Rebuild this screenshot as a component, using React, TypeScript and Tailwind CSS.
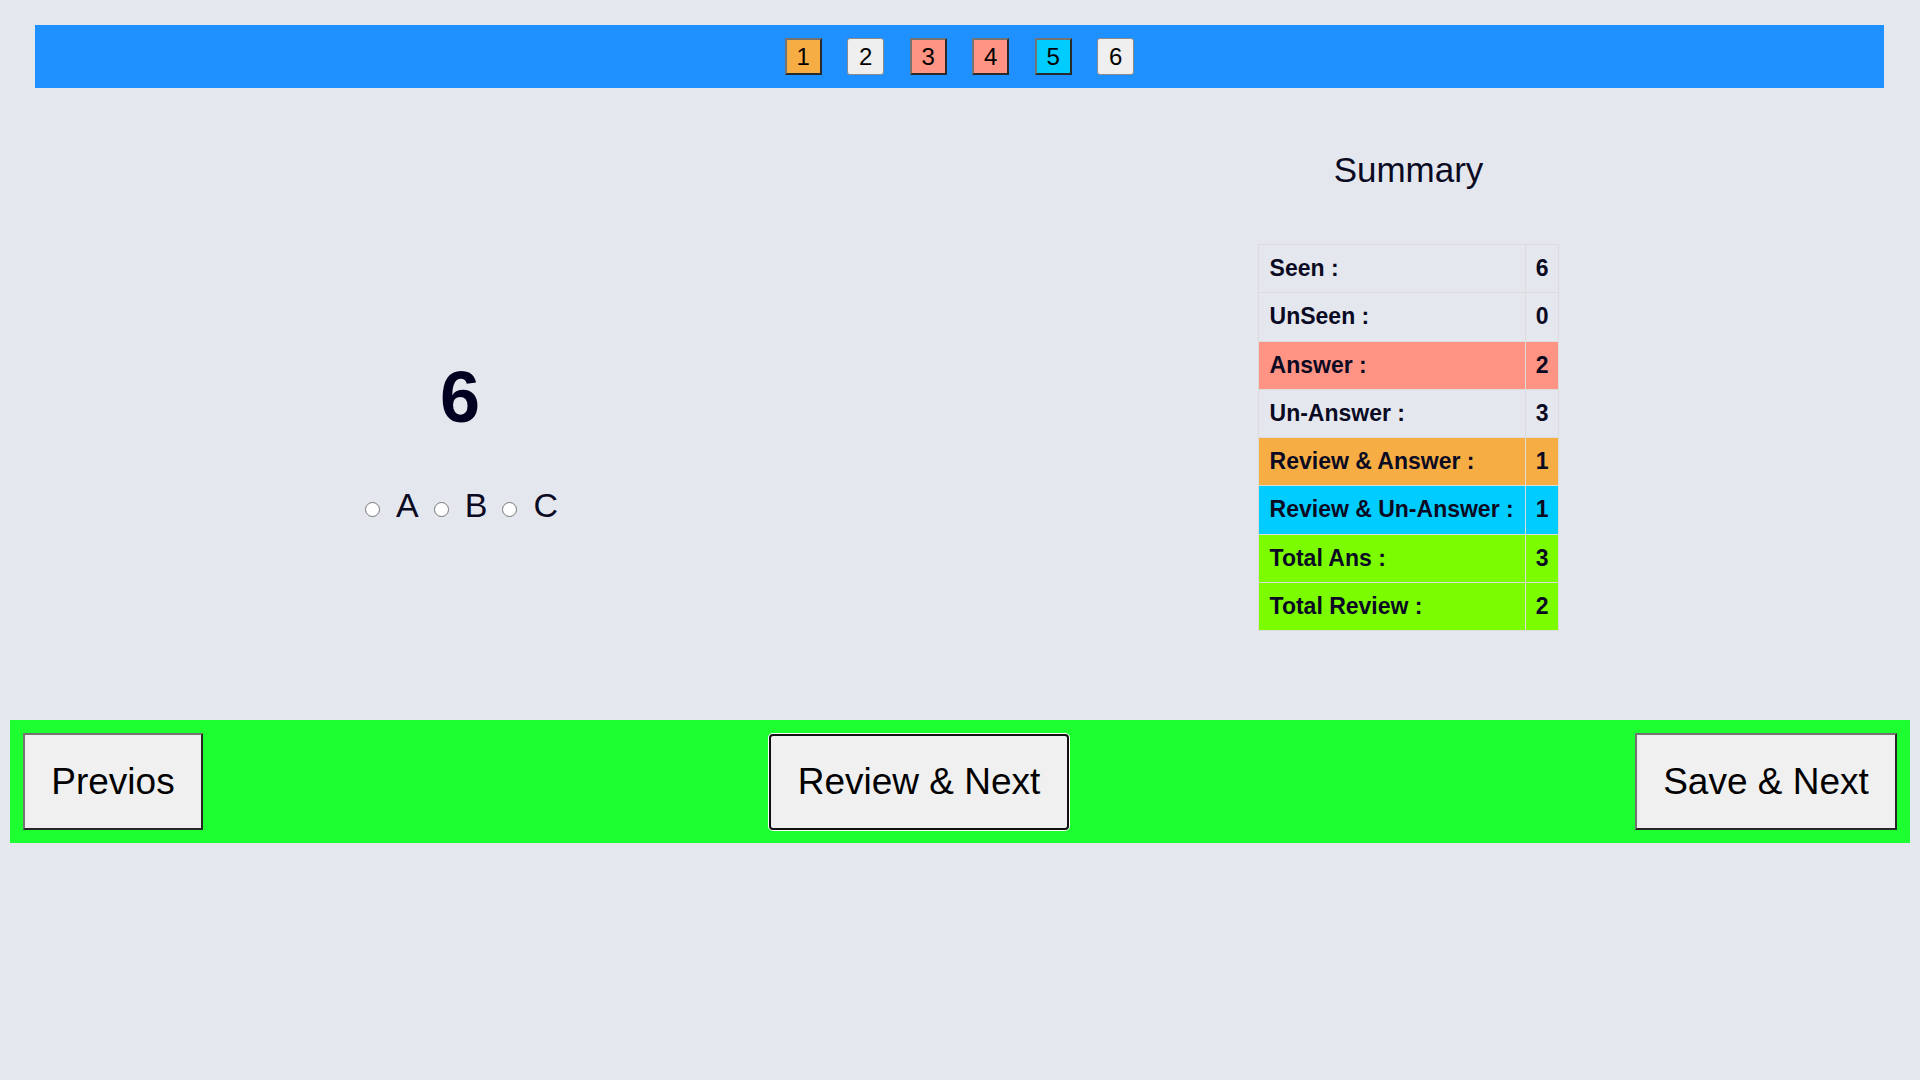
import React from 'react';

type Status = 'answered' | 'seen' | 'marked' | 'review';

const questions: { n: number; status: Status }[] = [
  { n: 1, status: 'marked' },
  { n: 2, status: 'seen' },
  { n: 3, status: 'answered' },
  { n: 4, status: 'answered' },
  { n: 5, status: 'review' },
  { n: 6, status: 'seen' },
];

const statusClass: Record<Status, string> = {
  marked: 'bg-[#f6ae44] border-2 border-t-[#737373] border-l-[#737373] border-b-[#2a2a2a] border-r-[#2a2a2a]',
  answered: 'bg-[#ff9384] border-2 border-t-[#737373] border-l-[#737373] border-b-[#2a2a2a] border-r-[#2a2a2a]',
  review: 'bg-[#00ccff] border-2 border-t-[#737373] border-l-[#737373] border-b-[#2a2a2a] border-r-[#2a2a2a]',
  seen: 'bg-[#efefef] border border-[#8a8a8a] rounded-[3px]',
};

const summary = [
  { label: 'Seen :', value: 6, bg: '' },
  { label: 'UnSeen :', value: 0, bg: '' },
  { label: 'Answer :', value: 2, bg: 'bg-[#ff9384]' },
  { label: 'Un-Answer :', value: 3, bg: '' },
  { label: 'Review & Answer :', value: 1, bg: 'bg-[#f6ae44]' },
  { label: 'Review & Un-Answer :', value: 1, bg: 'bg-[#00ccff]' },
  { label: 'Total Ans :', value: 3, bg: 'bg-[#7cfc00]' },
  { label: 'Total Review :', value: 2, bg: 'bg-[#7cfc00]' },
];

const outset =
  'bg-[#f0f0f0] border-2 border-t-[#737373] border-l-[#737373] border-b-[#262626] border-r-[#262626]';

const Option = ({ label }: { label: string }) => (
  <label className="flex items-center">
    <span className="w-[15px] h-[15px] mt-[7px] rounded-full bg-white border border-[#767676]" />
    <span className="ml-[16px]">{label}</span>
  </label>
);

export default function App() {
  return (
    <div className="min-h-screen bg-[#e5e7ef] text-[#0a0a23] font-['Liberation_Sans',Arial,sans-serif]">
      <div className="pt-[25px] pl-[35px] pr-[36px]">
        <nav className="h-[63px] bg-[#1e90ff] flex items-center justify-center gap-[25.5px]">
          {questions.map((q) => (
            <button
              key={q.n}
              className={`w-[37px] h-[37px] flex items-center justify-center text-[24px] leading-none text-black ${statusClass[q.status]}`}
            >
              {q.n}
            </button>
          ))}
        </nav>
      </div>

      <main className="flex">
        <section className="w-[920px] flex flex-col items-center pt-[268px]">
          <h1 className="text-[72px] leading-[83px] font-bold text-[#000020]">6</h1>
          <div className="mt-[47px] pl-[3px] flex items-center gap-[15px] text-[34px] leading-[39px]">
            <Option label="A" />
            <Option label="B" />
            <Option label="C" />
          </div>
        </section>

        <section className="w-[977px] flex flex-col items-center pt-[62px]">
          <h2 className="text-[35px] leading-[40px]">Summary</h2>
          <table className="mt-[54px] border-collapse text-[23px] leading-[27.3px] font-bold">
            <tbody>
              {summary.map((row) => (
                <tr key={row.label} className={row.bg}>
                  <td className="border border-[#dcdcdc] px-[11px] py-[10px] whitespace-nowrap">
                    {row.label}
                  </td>
                  <td className="border border-[#dcdcdc] px-[10px] py-[10px] text-center">
                    {row.value}
                  </td>
                </tr>
              ))}
            </tbody>
          </table>
        </section>
      </main>

      <footer className="mt-[89px] mx-[10px] h-[123px] bg-[#1eff32] px-[13px] flex items-center justify-between text-[37px] text-black">
        <button className={`w-[180px] h-[97px] ${outset}`}>Previos</button>
        <button className="w-[300px] h-[96px] bg-[#f0f0f0] border-2 border-[#101010] rounded-[4px] shadow-[0_0_0_1px_#ffffff]">
          Review &amp; Next
        </button>
        <button className={`w-[262px] h-[97px] ${outset}`}>Save &amp; Next</button>
      </footer>
    </div>
  );
}
